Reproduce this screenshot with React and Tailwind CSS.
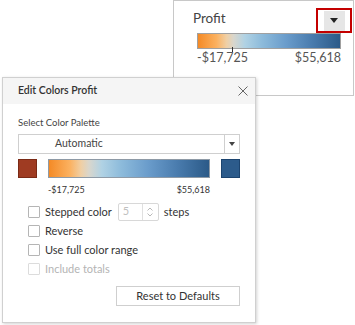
import React from "react";

const GRADIENT =
  "linear-gradient(to right, #f48a26 0%, #fbb160 13%, #f0cfa4 20%, #d9d6cc 25%, #b0d2e4 33%, #8dbbdb 45%, #6a9ccb 62%, #4a7cae 80%, #2b5a88 100%)";

const Triangle = ({ w = 8, h = 5 }) => (
  <svg width={w} height={h} viewBox="0 0 8 5" preserveAspectRatio="none">
    <polygon points="0,0 8,0 4,5" fill="currentColor" />
  </svg>
);

const Checkbox = ({ label, disabled }) => (
  <div className="flex h-[19px] items-center gap-[5px] pl-[10px]">
    <span
      className={
        "block h-[12px] w-[12px] rounded-[1px] border bg-white " +
        (disabled ? "border-[#dcdcdc]" : "border-[#b5b5b5]")
      }
    ></span>
    <span
      className={
        "text-[11px] leading-[14px] " +
        (disabled ? "text-[#b4b4b4]" : "text-[#333]")
      }
    >
      {label}
    </span>
  </div>
);

const LegendCard = () => (
  <div className="absolute left-[173px] top-0 h-[96px] w-[181px] border border-[#c8c8c8] bg-white">
    <div className="flex items-start justify-between pl-[19px] pr-[1px] pt-[7px]">
      <span className="mt-[2px] text-[13.5px] leading-[16px] text-[#444]">Profit</span>
      <div className="flex h-[25px] w-[36px] items-center justify-center border-2 border-[#c40000]">
        <div className="flex h-[20px] w-[21px] items-center justify-center bg-[#e6e6e6] text-[#222]">
          <Triangle />
        </div>
      </div>
    </div>
    <div className="relative ml-[23px] w-[144px]">
      <div
        className="h-[16px] w-full border border-[#a0a0a0]"
        style={{ background: GRADIENT }}
      ></div>
      <span className="absolute left-[35px] top-[14px] block h-[5px] w-[1px] bg-[#333]"></span>
    </div>
    <div className="ml-[23px] mt-[2px] flex w-[144px] justify-between text-[12.5px] leading-[14px] text-[#555]">
      <span>-$17,725</span>
      <span>$55,618</span>
    </div>
  </div>
);

const EditColorsDialog = () => (
  <div className="absolute left-[2px] top-[77px] h-[246px] w-[254px] border border-[#d0d0d0] bg-white shadow-[1px_1px_3px_rgba(0,0,0,0.18)]">
    <div className="flex h-[26px] items-center justify-between bg-[#f5f5f5] pl-[15px] pr-[7px]">
      <span className="text-[10.5px] font-semibold text-[#333]">Edit Colors Profit</span>
      <svg width="10" height="10" viewBox="0 0 10 10" className="text-[#666]">
        <path d="M0.5 0.5 L9.5 9.5 M9.5 0.5 L0.5 9.5" stroke="currentColor" strokeWidth="1" />
      </svg>
    </div>

    <div className="px-[15px]">
      <div className="mt-[13px] text-[9.5px] leading-[12px] text-[#444]">Select Color Palette</div>

      <div className="mt-[5px] flex h-[20px] w-[222px] border border-[#cfcfcf]">
        <div className="flex flex-1 items-center pl-[36px] text-[10.5px] text-[#444]">Automatic</div>
        <div className="flex w-[15px] items-center justify-center border-l border-[#cfcfcf] text-[#444]">
          <Triangle w={6} h={4} />
        </div>
      </div>

      <div className="mt-[5px] flex h-[19px] w-[222px] gap-[11px]">
        <div className="h-full w-[19px] border border-[#7a2a16] bg-[#9f3b22]"></div>
        <div className="h-full flex-1 border border-[#8e9aa6]" style={{ background: GRADIENT }}></div>
        <div className="h-full w-[19px] border border-[#1c446f] bg-[#2c5b8b]"></div>
      </div>

      <div className="ml-[30px] mt-[6px] flex w-[162px] justify-between text-[9px] leading-[11px] text-[#333]">
        <span>-$17,725</span>
        <span>$55,618</span>
      </div>

      <div className="mt-[7px]">
        <div className="flex h-[19px] items-center pl-[10px]">
          <span className="block h-[12px] w-[12px] rounded-[1px] border border-[#b5b5b5] bg-white"></span>
          <span className="ml-[5px] text-[11px] leading-[14px] text-[#333]">Stepped color</span>
          <div className="ml-[6px] flex h-[18px] w-[41px] rounded-[2px] border border-[#d8d8d8]">
            <span className="flex flex-1 items-center pl-[4px] text-[11px] text-[#c0c0c0]">5</span>
            <div className="flex w-[16px] flex-col items-center justify-center gap-[2px] border-l border-[#e0e0e0]">
              <svg width="6" height="4" viewBox="0 0 6 4">
                <path d="M0.5 3.5 L3 1 L5.5 3.5" fill="none" stroke="#b8b8b8" strokeWidth="1" />
              </svg>
              <svg width="6" height="4" viewBox="0 0 6 4">
                <path d="M0.5 0.5 L3 3 L5.5 0.5" fill="none" stroke="#b8b8b8" strokeWidth="1" />
              </svg>
            </div>
          </div>
          <span className="ml-[5px] text-[11px] leading-[14px] text-[#333]">steps</span>
        </div>
        <Checkbox label="Reverse" />
        <Checkbox label="Use full color range" />
        <Checkbox label="Include totals" disabled />
      </div>

      <div className="mt-[8px] flex w-[222px] justify-end">
        <button className="flex h-[20px] w-[124px] items-center justify-center border border-[#cfcfcf] bg-white text-[11px] text-[#333]">
          Reset to Defaults
        </button>
      </div>
    </div>
  </div>
);

export default function App() {
  return (
    <div className="relative h-[325px] w-[355px] overflow-hidden bg-white font-['Lato',sans-serif]">
      <LegendCard />
      <EditColorsDialog />
    </div>
  );
}
